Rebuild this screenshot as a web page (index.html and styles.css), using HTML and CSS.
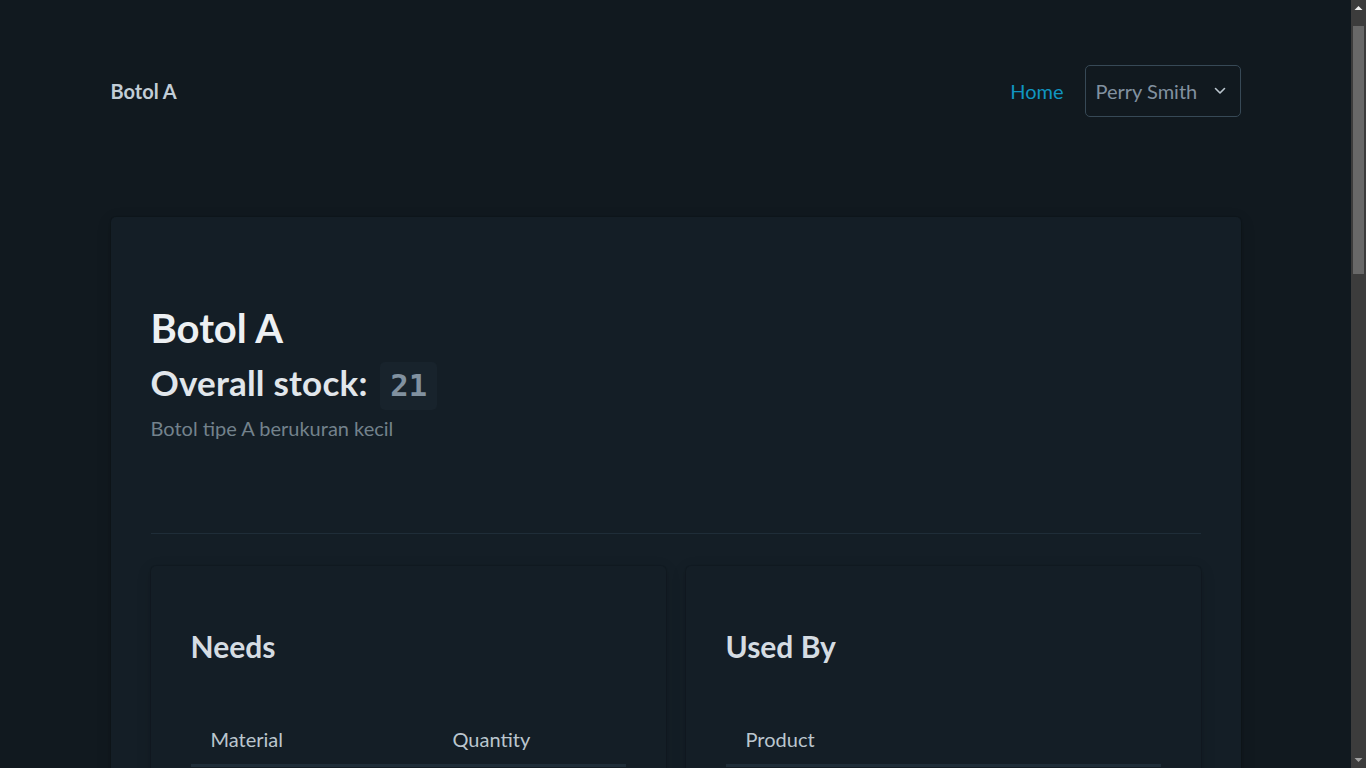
FILE: index.html
```html
<!DOCTYPE html>
<html lang="en">
<head>
<meta charset="utf-8">
<title>Botol A</title>
<link rel="stylesheet" href="styles.css">
</head>
<body>
<nav class="container nav">
  <strong class="brand">Botol A</strong>
  <ul class="nav-list">
    <li><a class="nav-link" href="#">Home</a></li>
    <li>
      <div class="dropdown">
        <span>Perry Smith</span>
        <svg class="chev" width="12" height="8" viewBox="0 0 12 8"><path d="M1.5 1.5 L6 6 L10.5 1.5" fill="none" stroke="#bbc6ce" stroke-width="1.6" stroke-linecap="round" stroke-linejoin="round"/></svg>
      </div>
    </li>
  </ul>
</nav>
<main class="container main">
  <article class="card outer">
    <div class="intro">
      <h1 class="title">Botol A</h1>
      <h2 class="subtitle">Overall stock: <code class="stock">21</code></h2>
      <p class="muted">Botol tipe A berukuran kecil</p>
    </div>
    <hr class="divider">
    <div class="grid">
      <article class="card inner">
        <h3 class="section-title">Needs</h3>
        <table class="table">
          <thead><tr><th class="col-main">Material</th><th>Quantity</th></tr></thead>
          <tbody>
            <tr><td>Plastik PET</td><td>2</td></tr>
            <tr><td>Tutup Botol</td><td>1</td></tr>
          </tbody>
        </table>
      </article>
      <article class="card inner">
        <h3 class="section-title">Used By</h3>
        <table class="table">
          <thead><tr><th>Product</th></tr></thead>
          <tbody>
            <tr><td>Paket Minuman A</td></tr>
          </tbody>
        </table>
      </article>
    </div>
  </article>
</main>
<div class="scrollbar" aria-hidden="true">
  <svg class="sb-arrow" width="15" height="17" viewBox="0 0 15 17"><path d="M3.5 10 L7.5 6 L11.5 10 Z" fill="#f0f0f0"/></svg>
  <div class="sb-track"><div class="sb-thumb"></div></div>
  <svg class="sb-arrow" width="15" height="17" viewBox="0 0 15 17"><path d="M3.5 7 L7.5 11 L11.5 7 Z" fill="#a0a0a0"/></svg>
</div>
</body>
</html>
```
FILE: styles.css
```css
* { box-sizing: border-box; }
html { font-size: 20px; }
body {
  margin: 0;
  padding-right: 15px;
  background: #11191f;
  color: #bbc6ce;
  font-family: Lato, "Noto Sans", sans-serif;
  font-size: 20px;
  line-height: 1.5;
}
.container {
  width: 1130px;
  margin: 0 auto;
}
.nav {
  display: flex;
  justify-content: space-between;
  align-items: center;
  padding-top: 65px;
}
.brand {
  font-weight: 700;
  color: #c2cdd6;
}
.nav-list {
  list-style: none;
  margin: 0;
  padding: 0;
  display: flex;
  align-items: center;
  gap: 21px;
}
.nav-link {
  color: #1095c1;
  text-decoration: none;
}
.dropdown {
  display: flex;
  align-items: center;
  justify-content: space-between;
  width: 156px;
  height: 52px;
  padding: 0 14px 0 10px;
  border: 1px solid #374956;
  border-radius: 5px;
  background: #11191f;
  color: #8191a0;
}
.chev { display: block; }
.main {
  margin-top: 100px;
  padding-bottom: 40px;
}
.card {
  background: #141e26;
  border-radius: 5px;
  box-shadow: 0 1px 3px rgba(0,0,0,0.12), 0 4px 16px rgba(0,0,0,0.12), 0 0 0 1px rgba(0,0,0,0.08);
}
.outer {
  padding: 89px 40px 40px;
}
.intro { padding-bottom: 90px; }
.title {
  margin: 0;
  font-size: 40px;
  line-height: 45px;
  font-weight: 700;
  color: #edf0f3;
}
.subtitle {
  margin: 9px 0 0;
  font-size: 35px;
  line-height: 44px;
  font-weight: 700;
  color: #e1e6eb;
  letter-spacing: 0.2px;
}
.stock {
  font-family: "DejaVu Sans Mono", "Liberation Mono", monospace;
  font-size: 30.6px;
  line-height: 33px;
  padding: 7.5px 10px;
  margin-left: 4px;
  border-radius: 5px;
  background: #18232c;
  color: #8191a0;
  display: inline-block;
  vertical-align: 0;
  letter-spacing: 0;
}
.muted {
  margin: 3px 0 0;
  color: #73828c;
}
.divider {
  margin: 0;
  border: 0;
  border-top: 1px solid #1f2d38;
}
.grid {
  display: grid;
  grid-template-columns: 1fr 1fr;
  gap: 20px;
  margin-top: 32px;
}
.inner {
  padding: 63px 40px 40px;
}
.section-title {
  margin: 0;
  font-size: 30px;
  line-height: 34px;
  font-weight: 700;
  color: #d5dce2;
}
.table {
  width: 100%;
  border-collapse: collapse;
  margin-top: 51px;
}
.table th, .table td {
  text-align: left;
  padding: 10px 20px;
  font-weight: 400;
}
.table .col-main { width: 242px; }
.table th {
  color: #bbc6ce;
  border-bottom: 3px solid #1f2d38;
}
.table td {
  border-bottom: 1px solid #1f2d38;
}
.scrollbar {
  position: fixed;
  top: 0;
  right: 0;
  width: 15px;
  height: 100vh;
  background: #3c3c3c;
  display: flex;
  flex-direction: column;
}
.sb-arrow { display: block; flex: none; }
.sb-track {
  flex: 1;
  padding: 9px 2px 0;
}
.sb-thumb {
  height: 248px;
  background: #686868;
}
```
